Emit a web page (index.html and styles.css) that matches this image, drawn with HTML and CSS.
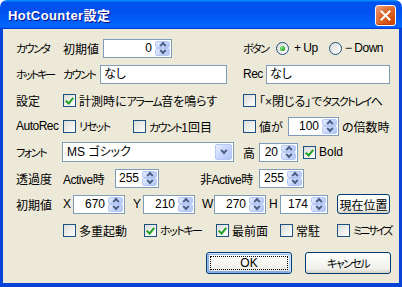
FILE: index.html
```html
<!DOCTYPE html>
<html lang="ja">
<head>
    <meta charset="UTF-8">
    <title>HotCounter設定</title>
    <link rel="stylesheet" href="styles.css">
</head>
<body>
    <div class="window">
        <div class="titlebar">
            <span class="title">HotCounter設定</span>
            <span class="close">
                <svg width="11" height="11" viewBox="0 0 11 11">
                    <path d="M1.5 1.5 L9.5 9.5 M9.5 1.5 L1.5 9.5" stroke="#fff" stroke-width="2" stroke-linecap="square"/>
                </svg>
            </span>
        </div>

        <div class="client">
            <!-- カウンタ -->
            <div class="row">
                <span class="lbl k">カウンタ</span>
                <div class="left">
                    <span class="cap cap-init">初期値</span>
                    <span class="spin spin-init"><span class="val">0</span><span class="arrows"><i class="up"></i><i class="down"></i></span></span>
                </div>
                <div class="right">
                    <span class="cap cap-btn k">ボタン</span>
                    <label class="opt opt-up l"><span class="radio on"></span>+ Up</label>
                    <label class="opt l"><span class="radio"></span>− Down</label>
                </div>
            </div>

            <!-- ホットキー -->
            <div class="row">
                <span class="lbl k tight">ホットキー</span>
                <div class="left">
                    <span class="cap cap-count k">カウント</span>
                    <span class="field field-count">なし</span>
                </div>
                <div class="right">
                    <span class="cap cap-rec l">Rec</span>
                    <span class="field field-rec">なし</span>
                </div>
            </div>

            <!-- 設定 -->
            <div class="row">
                <span class="lbl">設定</span>
                <div class="left">
                    <label class="opt"><span class="check on"></span><span>計測時に<span class="k">アラーム</span>音を鳴らす</span></label>
                </div>
                <div class="right">
                    <label class="opt"><span class="check"></span><span>「×閉じる」で<span class="k">タスクトレイ</span>へ</span></label>
                </div>
            </div>

            <!-- AutoRec -->
            <div class="row">
                <span class="lbl l">AutoRec</span>
                <div class="left">
                    <label class="opt opt-reset k"><span class="check"></span>リセット</label>
                    <label class="opt"><span class="check"></span><span><span class="k">カウント</span>1回目</span></label>
                </div>
                <div class="right">
                    <label class="opt opt-val"><span class="check"></span>値が</label>
                    <span class="spin spin-mult"><span class="val">100</span><span class="arrows"><i class="up"></i><i class="down"></i></span></span>
                    <span class="cap cap-mult">の倍数時</span>
                </div>
            </div>

            <!-- フォント -->
            <div class="row">
                <span class="lbl k">フォント</span>
                <div class="left">
                    <span class="select"><span class="val">MS ゴシック</span><span class="drop"></span></span>
                </div>
                <div class="right">
                    <span class="cap cap-high">高</span>
                    <span class="spin spin-size"><span class="val">20</span><span class="arrows"><i class="up"></i><i class="down"></i></span></span>
                    <label class="opt opt-bold"><span class="check on"></span>Bold</label>
                </div>
            </div>

            <!-- 透過度 -->
            <div class="row">
                <span class="lbl">透過度</span>
                <div class="line">
                    <span class="cap cap-active l">Active時</span>
                    <span class="spin spin-alpha"><span class="val">255</span><span class="arrows"><i class="up"></i><i class="down"></i></span></span>
                    <span class="cap cap-inactive l">非Active時</span>
                    <span class="spin spin-alpha2"><span class="val">255</span><span class="arrows"><i class="up"></i><i class="down"></i></span></span>
                </div>
            </div>

            <!-- 初期値 (位置) -->
            <div class="row">
                <span class="lbl">初期値</span>
                <div class="line">
                    <span class="cap cap-x">X</span>
                    <span class="spin spin-pos"><span class="val">670</span><span class="arrows"><i class="up"></i><i class="down"></i></span></span>
                    <span class="cap cap-y">Y</span>
                    <span class="spin spin-pos"><span class="val">210</span><span class="arrows"><i class="up"></i><i class="down"></i></span></span>
                    <span class="cap cap-w">W</span>
                    <span class="spin spin-pos"><span class="val">270</span><span class="arrows"><i class="up"></i><i class="down"></i></span></span>
                    <span class="cap cap-h">H</span>
                    <span class="spin spin-h"><span class="val">174</span><span class="arrows"><i class="up"></i><i class="down"></i></span></span>
                    <span class="btn btn-pos">現在位置</span>
                </div>
            </div>

            <!-- オプション -->
            <div class="row">
                <span class="lbl"></span>
                <div class="line">
                    <label class="opt opt-multi"><span class="check"></span>多重起動</label>
                    <label class="opt opt-hot k"><span class="check on"></span>ホットキー</label>
                    <label class="opt opt-top"><span class="check on"></span>最前面</label>
                    <label class="opt opt-res"><span class="check"></span>常駐</label>
                    <label class="opt k tight"><span class="check"></span>ミニサイズ</label>
                </div>
            </div>

            <div class="buttons">
                <span class="btn btn-ok">OK</span>
                <span class="btn btn-cancel k">キャンセル</span>
            </div>
        </div>
    </div>
</body>
</html>
```

FILE: styles.css
```css
body {
    margin: 0;
    background: #fff;
    font-family: 'Liberation Sans', 'Noto Sans CJK JP', sans-serif;
    font-size: 12px;
    color: #000;
    font-feature-settings: "palt";
}

/* カナは MS UI Gothic 風に詰める */
.k {
    font-size: 11px;
    letter-spacing: -1.5px;
}

.k.tight {
    letter-spacing: -2.2px;
}

/* 英字ラベル */
.l {
    letter-spacing: -0.5px;
}

.window {
    width: 402px;
    height: 287px;
    display: flex;
    flex-direction: column;
    border-radius: 7px 7px 0 0;
    overflow: hidden;
}

/* タイトルバー */
.titlebar {
    height: 29px;
    flex: none;
    display: flex;
    align-items: center;
    justify-content: space-between;
    padding: 0 6px 0 8px;
    background: linear-gradient(180deg, #0997ff, #0053ee 8%, #0050ee 40%, #0066ff 88%, #0066ff 93%, #005bff 95%, #003dd7 96%, #003dd7);
}

.title {
    color: #fff;
    font-weight: bold;
    font-size: 13px;
    letter-spacing: 0.4px;
    text-shadow: 1px 1px #0f1089;
}

.close {
    width: 21px;
    height: 21px;
    box-sizing: border-box;
    margin-top: 1px;
    border: 1px solid #fff;
    border-radius: 3px;
    display: flex;
    align-items: center;
    justify-content: center;
    background: radial-gradient(circle at 90% 90%, #cc4600 0%, #dc6527 55%, #f0a58a 100%);
    box-shadow: inset 0 -1px 1px #c23f0a;
}

.client {
    flex: 1;
    background: #ece9d8;
    border: 3px solid #0842d6;
    border-top: none;
    border-bottom-width: 4px;
    padding: 6px 8px 0 13px;
}

/* 行 */
.row {
    height: 26px;
    display: flex;
    align-items: center;
}

.lbl {
    width: 47px;
    flex: none;
    white-space: nowrap;
}

.left {
    width: 180px;
    flex: none;
    display: flex;
    align-items: center;
}

.right,
.line {
    display: flex;
    align-items: center;
}

.cap {
    flex: none;
    white-space: nowrap;
}

.cap-init { width: 40px; }
.cap-count { width: 37px; }
.cap-btn { width: 33px; }
.cap-rec { width: 23px; }
.cap-mult { margin-left: 3px; }
.cap-high { width: 16px; }
.cap-active { width: 52px; }
.cap-inactive { width: 59px; margin-left: 41px; }
.cap-x { width: 10px; }
.cap-y { width: 10px; margin-left: 8px; }
.cap-w { width: 12px; margin-left: 7px; }
.cap-h { width: 11px; margin-left: 3px; }

/* オプション (チェック / ラジオ) */
.opt {
    display: flex;
    align-items: center;
    flex: none;
    white-space: nowrap;
}

.opt-up { width: 53px; }
.opt-up .radio { margin-right: 5px; }
.opt-reset { width: 70px; }
.opt-val { width: 45px; }
.opt-bold { margin-left: 5px; }
.opt-multi { width: 81px; }
.opt-hot { width: 72px; }
.opt-top { width: 64px; }
.opt-res { width: 57px; }

.check,
.radio {
    width: 13px;
    height: 13px;
    box-sizing: border-box;
    flex: none;
    position: relative;
    margin-right: 3px;
    border: 1px solid #1c5180;
    background: linear-gradient(135deg, #dcdcd7, #fff);
}

.radio {
    border-radius: 50%;
}

.check.on::after {
    content: "";
    position: absolute;
    left: 3px;
    top: 1px;
    width: 3px;
    height: 6px;
    border-right: 2px solid #21a121;
    border-bottom: 2px solid #21a121;
    transform: rotate(40deg);
}

.radio.on::after {
    content: "";
    position: absolute;
    left: 3px;
    top: 3px;
    width: 5px;
    height: 5px;
    border-radius: 50%;
    background: radial-gradient(circle at 35% 35%, #8ce98c, #21a121 70%);
}

/* 入力欄 */
.field {
    height: 19px;
    box-sizing: border-box;
    border: 1px solid #7f9db9;
    background: #fff;
    padding: 0 3px;
    line-height: 17px;
    flex: none;
}

.field-count { width: 127px; }
.field-rec { width: 124px; }

.spin {
    height: 19px;
    box-sizing: border-box;
    border: 1px solid #7f9db9;
    background: #fff;
    padding: 1px;
    display: flex;
    flex: none;
}

.spin .val {
    flex: 1;
    text-align: right;
    padding-right: 3px;
    line-height: 15px;
}

.spin-init { width: 69px; }
.spin-mult { width: 51px; }
.spin-size { width: 39px; }
.spin-alpha { width: 44px; }
.spin-alpha2 { width: 45px; }
.spin-pos { width: 52px; }
.spin-h { width: 48px; }

.arrows {
    width: 15px;
    display: flex;
    flex-direction: column;
}

.arrows i,
.drop {
    position: relative;
    box-sizing: border-box;
    border: 1px solid #b4c8f6;
    border-radius: 2px;
    background: linear-gradient(135deg, #e6eefc 0%, #c6d5fc 50%, #b2c6f5 100%);
}

.arrows i {
    flex: 1;
}

.arrows i::after,
.drop::after {
    content: "";
    position: absolute;
    left: 50%;
    top: 50%;
    width: 3px;
    height: 3px;
    border-left: 2px solid #4d6185;
    border-top: 2px solid #4d6185;
}

.arrows .up::after {
    transform: translate(-50%, -25%) rotate(45deg);
}

.arrows .down::after {
    transform: translate(-50%, -75%) rotate(225deg);
}

/* フォント選択 */
.select {
    width: 172px;
    height: 20px;
    box-sizing: border-box;
    margin-left: -1px;
    border: 1px solid #7f9db9;
    background: #fff;
    padding: 1px;
    display: flex;
}

.select .val {
    flex: 1;
    padding-left: 3px;
    line-height: 16px;
}

.drop {
    width: 17px;
}

.drop::after {
    transform: translate(-50%, -75%) rotate(225deg);
}

/* ボタン */
.btn {
    display: flex;
    align-items: center;
    justify-content: center;
    box-sizing: border-box;
    border: 1px solid #003c74;
    border-radius: 3px;
    background: linear-gradient(180deg, #fff 0%, #f0f0ea 80%, #d6d0c5 100%);
    position: relative;
    flex: none;
}

.btn-pos {
    width: 53px;
    height: 20px;
    margin-left: 9px;
}

.buttons {
    display: flex;
    justify-content: flex-end;
    gap: 13px;
    margin-top: 9px;
}

.btn-ok,
.btn-cancel {
    width: 86px;
    height: 22px;
}

.btn-ok {
    box-shadow: inset -1px 1px #cee7ff, inset 1px 2px #98b8ea, inset -2px 2px #bcd4f6, inset 1px -1px #89ade4, inset 2px -2px #89ade4;
}

.btn-ok::before {
    content: "";
    position: absolute;
    inset: 3px;
    border: 1px dotted #000;
}
```
